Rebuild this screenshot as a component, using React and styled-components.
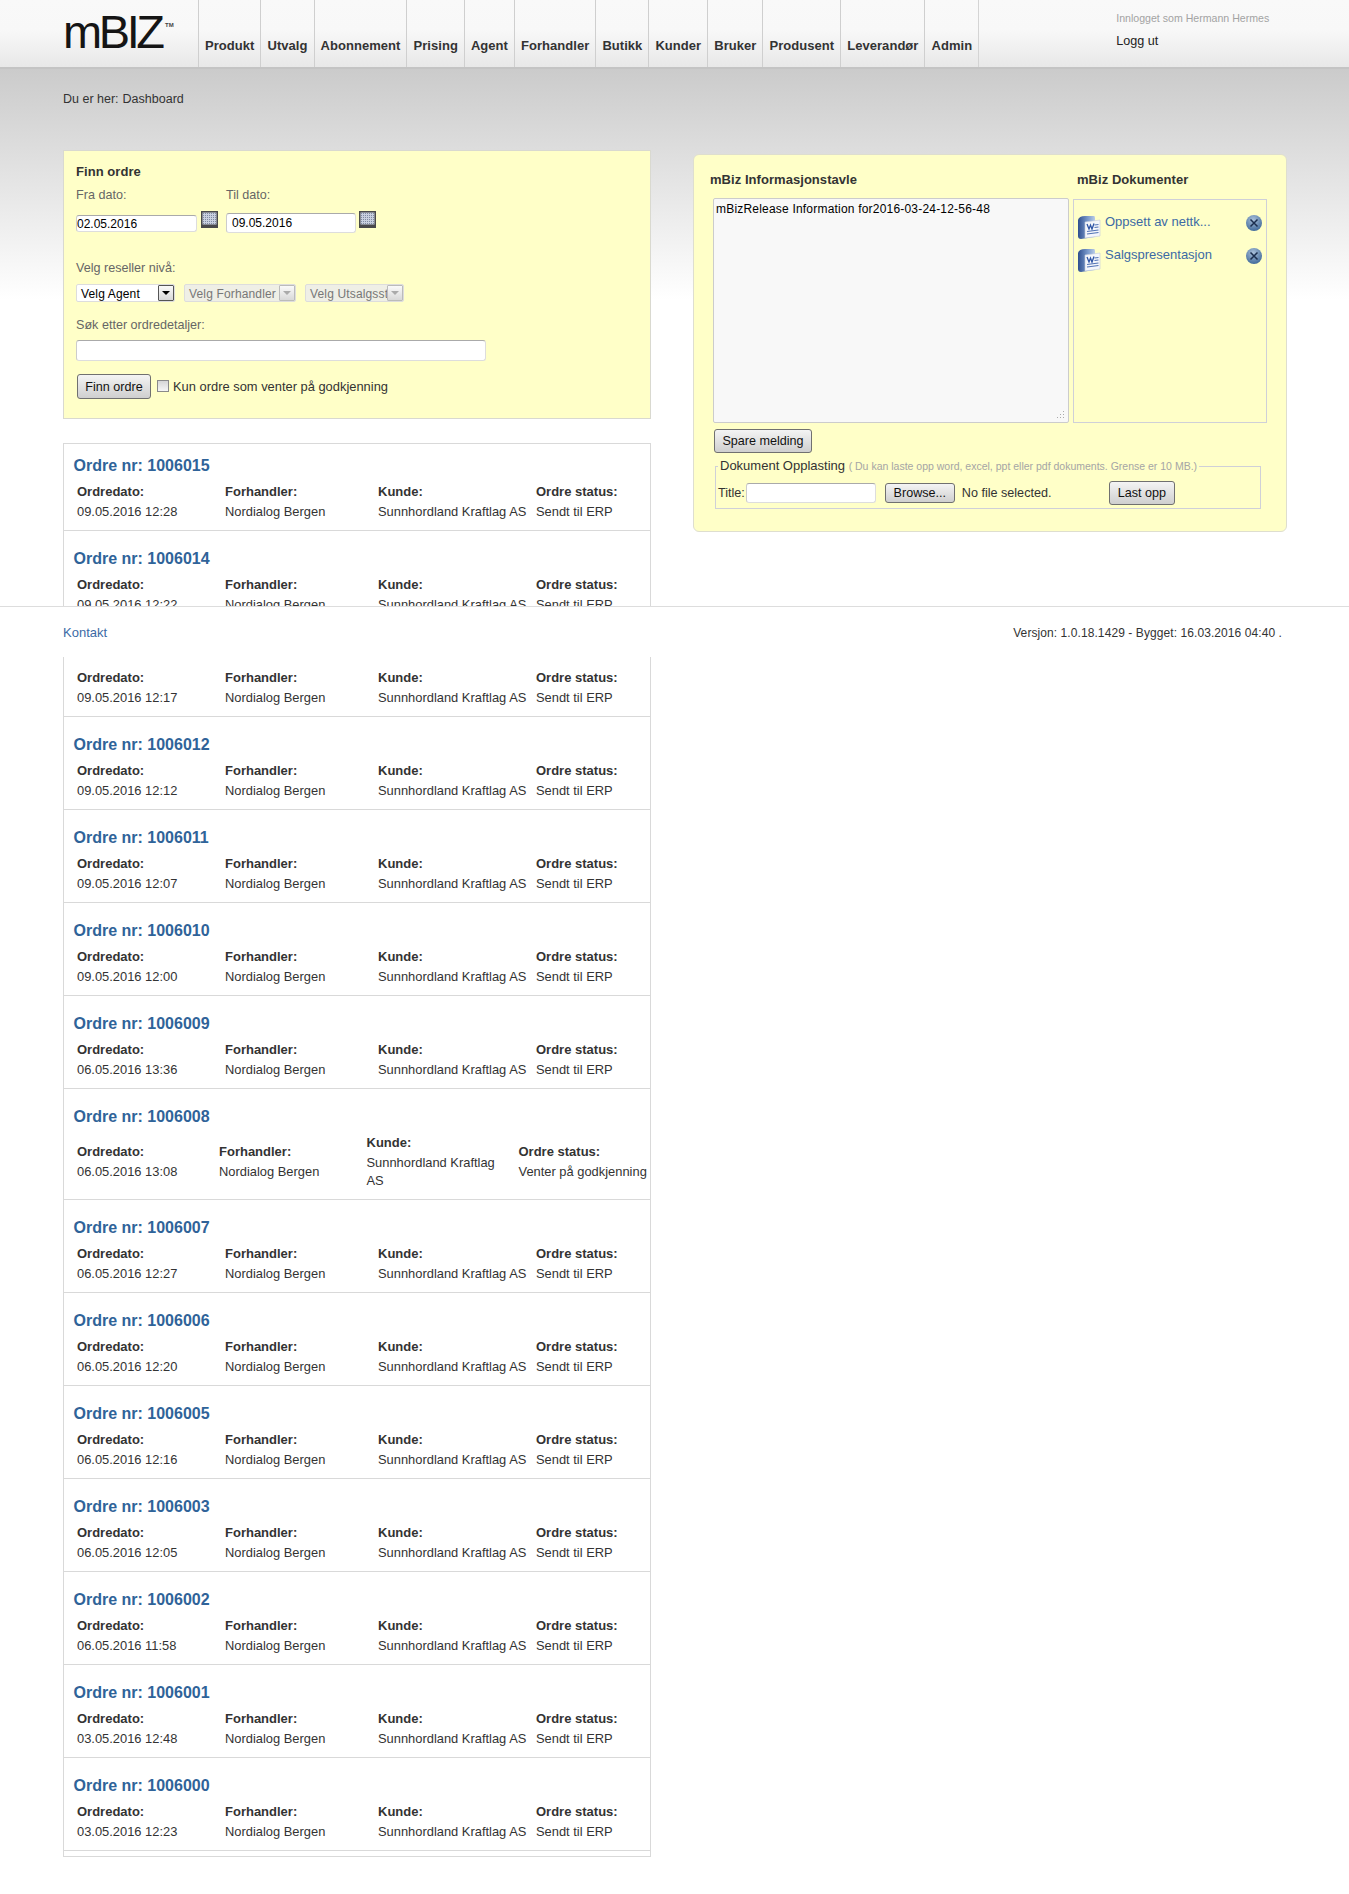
import React from "react";
import styled, { createGlobalStyle } from "styled-components";

const Global = createGlobalStyle`
  html, body { margin: 0; padding: 0; background: #fff; }
  body { font-family: "Liberation Sans", Arial, sans-serif; font-size: 12px; color: #333; }
  * { box-sizing: border-box; }
`;

const Page = styled.div`
  position: relative;
  width: 1349px;
  height: 1894px;
  overflow: hidden;
  background: linear-gradient(#cbcbcb 69px, #ffffff 300px);
`;
const Header = styled.header`
  display: flex;
  height: 69px;
  padding-left: 63px;
  background: linear-gradient(#f9f9f9 0, #f8f8f8 30px, #e8e8e8 67px);
  border-bottom: 2px solid #c4c4c4;
`;
const Logo = styled.a`
  display: block;
  position: relative;
  width: 135px;
  height: 67px;
  padding-top: 5px;
  font-size: 47px;
  line-height: 54px;
  letter-spacing: -3.4px;
  color: #151515;
  white-space: nowrap;
`;
const Trademark = styled.sup`
  position: absolute;
  left: 102px;
  top: 21px;
  font-size: 6px;
  line-height: 8px;
  letter-spacing: 0;
  font-weight: bold;
  color: #444;
`;
const Nav = styled.nav`
  display: flex;
  height: 67px;
  border-right: 1px solid #d4d4d4;
`;
const NavItem = styled.a`
  display: block;
  padding: 38px 6px 0;
  border-left: 1px solid #cfcfcf;
  font-size: 13px;
  line-height: 16px;
  letter-spacing: 0.05px;
  font-weight: bold;
  color: #333;
  white-space: nowrap;
`;
const UserBox = styled.div`
  margin-left: 137px;
  padding-top: 12px;
`;
const UserName = styled.div`
  font-size: 10.6px;
  line-height: 13px;
  color: #a3a3a3;
`;
const Logout = styled.a`
  display: block;
  margin-top: 9px;
  font-size: 12.6px;
  line-height: 14px;
  color: #222;
`;
const Crumb = styled.div`
  display: flex;
  gap: 4px;
  padding: 22px 0 0 63px;
  height: 81px;
  font-size: 12.5px;
  line-height: 16px;
  color: #333;
`;
const Columns = styled.main`
  display: grid;
  grid-template-columns: 588px 594px;
  column-gap: 42px;
  padding-left: 63px;
  align-items: start;
`;
const LeftColumn = styled.div`
  display: flex;
  flex-direction: column;
  gap: 24px;
`;
const FilterPanel = styled.section`
  height: 269px;
  padding: 13px 12px 0;
  background: #ffffc8;
  border: 1px solid #d9d9d0;
`;
const PanelHeading = styled.h3`
  margin: 0;
  font-size: 13px;
  line-height: 16px;
  letter-spacing: 0.05px;
  font-weight: bold;
  color: #333;
`;
const DocHeading = styled(PanelHeading)`
  padding-left: 4px;
`;
const DateGrid = styled.div`
  display: grid;
  grid-template-columns: 150px 1fr;
  margin-top: 7px;
`;
const FieldLabel = styled.label`
  display: block;
  font-size: 12.6px;
  line-height: 16px;
  color: #666;
  margin-top: ${(p) => p.$top || 0}px;
`;
const DateField = styled.div`
  display: flex;
  align-items: flex-start;
  margin-top: 8px;
  height: 22px;
`;
const TextInput = styled.input`
  display: block;
  border: 1px solid #ddd;
  border-top-color: #aaa;
  border-left-color: #ccc;
  border-radius: 3px;
  background: #fff;
  font: 12px "Liberation Sans", Arial, sans-serif;
  color: #000;
  outline: none;
`;
const DateInput = styled(TextInput)`
  width: ${(p) => (p.$compact ? 121 : 130)}px;
  height: ${(p) => (p.$compact ? 17 : 20)}px;
  margin-top: ${(p) => (p.$compact ? 4 : 2)}px;
  padding: 0 0 0 ${(p) => (p.$compact ? 0 : 5)}px;
`;
const CalendarSvg = styled.svg`
  display: block;
  margin-left: ${(p) => (p.$compact ? 4 : 3)}px;
`;
const SelectRow = styled.div`
  display: flex;
  gap: 9px;
  margin-top: 8px;
`;
const SelectBox = styled.div`
  display: flex;
  justify-content: space-between;
  align-items: stretch;
  width: ${(p) => p.$w}px;
  height: 18px;
  border: 1px solid #ddd;
  border-radius: 2px;
  background: ${(p) => (p.$disabled ? "#efefe6" : "#fff")};
  color: ${(p) => (p.$disabled ? "#777" : "#000")};
  overflow: hidden;
`;
const SelectText = styled.span`
  flex: 1;
  min-width: 0;
  padding-left: 4px;
  line-height: 18px;
  letter-spacing: 0.15px;
  white-space: nowrap;
  overflow: hidden;
`;
const SelectArrow = styled.span`
  display: flex;
  align-items: center;
  justify-content: center;
  flex: none;
  width: 16px;
  background: linear-gradient(#fafafa, #d8d8d8);
  border: 1px solid ${(p) => (p.$disabled ? "#bbb" : "#555")};
  border-radius: 1px;
  &::after {
    content: "";
    border: 4px solid transparent;
    border-bottom-width: 0;
    border-top: 4px solid ${(p) => (p.$disabled ? "#aaa" : "#000")};
  }
`;
const SearchInput = styled(TextInput)`
  width: 410px;
  height: 21px;
  margin-top: 7px;
`;
const ActionRow = styled.div`
  display: flex;
  align-items: center;
  margin-top: 13px;
  padding-left: 1px;
`;
const Btn = styled.button`
  display: block;
  flex: none;
  padding: 0;
  width: ${(p) => p.$w}px;
  height: ${(p) => p.$h || 25}px;
  border: 1px solid #707070;
  border-radius: 3px;
  background: linear-gradient(#f4f4f4, #cfcfcf);
  font: 12.6px "Liberation Sans", Arial, sans-serif;
  color: #111;
`;
const Check = styled.span`
  display: block;
  flex: none;
  width: 12px;
  height: 12px;
  margin: -1px 4px 0 6px;
  border: 1px solid #8a8a8a;
  background: linear-gradient(#d6d6d6, #f6f6f6);
`;
const CheckLabel = styled.span`
  font-size: 12.9px;
  color: #333;
`;
const OrderList = styled.section`
  border: 1px solid #d9d9d9;
  background: #fff;
  padding-bottom: 5px;
`;
const OrderRow = styled.article`
  padding: ${(p) => (p.$first ? 12 : 18)}px 0 8px 9.5px;
  border-bottom: 1px solid #d9d9d9;
`;
const OrderTitle = styled.h2`
  margin: 0;
  padding-top: 1px;
  font-size: 16px;
  line-height: 17px;
  font-weight: bold;
  color: #2f6399;
`;
const Cols = styled.div`
  display: grid;
  grid-template-columns: ${(p) => (p.$wide ? "142px 147.5px 152px auto" : "148px 153px 158px auto")};
  align-items: center;
  margin-top: 8px;
  padding-left: 3.5px;
  font-size: 13px;
`;
const Cell = styled.div`
  padding-right: 8px;
`;
const StatusCell = styled.div`
  white-space: nowrap;
`;
const CellLabel = styled.div`
  font-weight: bold;
  line-height: 20px;
  color: #333;
`;
const CellValue = styled.div`
  padding: 1px 0;
  font-size: 12.9px;
  line-height: 18px;
  color: #333;
`;
const InfoPanel = styled.section`
  margin-top: 4px;
  height: 378px;
  padding: 17px 0 0 16px;
  background: #ffffc8;
  border: 1px solid #dedecf;
  border-radius: 6px;
`;
const InfoGrid = styled.div`
  display: grid;
  grid-template-columns: 363px 194px;
`;
const BoardArea = styled.div`
  height: 225px;
  width: 356px;
  margin: 10px 0 0 3px;
  position: relative;
  padding: 3px 2px;
  border: 1px solid #ccc;
  border-radius: 2px;
  background: #f8f8f8;
  color: #000;
  letter-spacing: 0.2px;
  line-height: 15px;
`;
const Grip = styled.svg`
  position: absolute;
  right: 3px;
  bottom: 3px;
`;
const DocBox = styled.div`
  height: 224px;
  margin-top: 11px;
  padding: 15px 4px 0 3px;
  border: 1px solid #cfd0d8;
  display: flex;
  flex-direction: column;
  gap: 9px;
`;
const DocRow = styled.div`
  display: flex;
  align-items: flex-start;
  height: 24px;
`;
const DocName = styled.a`
  flex: 1;
  margin-left: 4px;
  font-size: 13px;
  line-height: 14px;
  color: #3c6aa5;
`;
const SaveBtn = styled(Btn)`
  margin: 6px 0 0 4px;
`;
const UploadSet = styled.fieldset`
  width: 546px;
  margin: 5px 0 0 5px;
  padding: 0 2px 3px 1px;
  border: 1px solid #cfd0d8;
`;
const UploadLegend = styled.legend`
  margin-left: 1px;
  padding: 0 2px;
  font-size: 13px;
  line-height: 16px;
  color: #333;
`;
const UploadHint = styled.span`
  font-size: 10.5px;
  color: #a5a5a5;
`;
const UploadRow = styled.div`
  display: flex;
  align-items: center;
  margin-top: 7px;
  padding-left: 1px;
  font-size: 12.6px;
`;
const TitleInput = styled(TextInput)`
  width: 130px;
  height: 20px;
  margin: 0 9px 0 1px;
`;
const FileName = styled.span`
  width: 154px;
  padding-left: 7px;
  color: #333;
`;
const Footer = styled.footer`
  position: absolute;
  left: 0;
  right: 0;
  top: 606px;
  height: 51px;
  display: flex;
  justify-content: space-between;
  padding: 17px 67px 0 63px;
  line-height: 18px;
  background: #fff;
  border-top: 1px solid #ddd;
`;
const FooterLink = styled.a`
  font-size: 13px;
  color: #3c6aa5;
`;
const Version = styled.span`
  letter-spacing: 0.08px;
  color: #333;
`;

const Calendar = ({ compact }) => {
  const cells = [];
  for (let y = 2; y < 13; y += 2)
    for (let x = 2; x < 15; x += 2)
      cells.push(<rect key={x + "-" + y} x={x} y={y} width="1" height="1" fill="#7f8aa3" />);
  return (
    <CalendarSvg $compact={compact} width="17" height="17" viewBox="0 0 17 17">
      <rect width="17" height="17" fill="#49494b" />
      <rect x="1.5" y="1.5" width="14" height="12" fill="#c9d0df" />
      {cells}
    </CalendarSvg>
  );
};

const WordIcon = () => (
  <svg width="24" height="24" viewBox="0 0 24 24" style={{ flex: "none" }}>
    <defs>
      <linearGradient id="wb" x1="0" y1="0" x2="1" y2="0">
        <stop offset="0" stopColor="#2f4f8f" />
        <stop offset="0.6" stopColor="#7d9ccd" />
        <stop offset="1" stopColor="#b9cbe6" />
      </linearGradient>
    </defs>
    <path d="M1 5 Q2 1 8 1 L17 1 Q18 1 18 3 L18 22 L4 24 Q1 24 1 21 Z" fill="url(#wb)" />
    <path d="M8 7 L23 5 L23 21 L8 23 Z" fill="#f4f6fb" stroke="#c2cbdc" strokeWidth="0.6" />
    <path d="M10 9 L12 14 L13.5 10 L15 14 L17 8.5" fill="none" stroke="#2f55a5" strokeWidth="1.3" />
    <path d="M17.5 10 L21.5 9.5 M17.5 12.5 L21.5 12 M10 16.5 L21.5 15 M10 19 L21.5 17.5" stroke="#5273b5" strokeWidth="1.1" />
  </svg>
);

const RemoveIcon = () => (
  <svg width="16" height="16" viewBox="0 0 16 16" style={{ flex: "none" }}>
    <defs>
      <radialGradient id="rb" cx="0.45" cy="0.3" r="0.8">
        <stop offset="0" stopColor="#a9c0da" />
        <stop offset="1" stopColor="#335f92" />
      </radialGradient>
    </defs>
    <circle cx="8" cy="8" r="8" fill="url(#rb)" />
    <path d="M4.5 4.5 L11.5 11.5 M11.5 4.5 L4.5 11.5" stroke="#1c2f4f" strokeWidth="1.5" />
  </svg>
);

const navItems = ["Produkt", "Utvalg", "Abonnement", "Prising", "Agent", "Forhandler", "Butikk", "Kunder", "Bruker", "Produsent", "Leverandør", "Admin"];

const orders = [
  ["1006015", "09.05.2016 12:28"],
  ["1006014", "09.05.2016 12:22"],
  ["1006013", "09.05.2016 12:17"],
  ["1006012", "09.05.2016 12:12"],
  ["1006011", "09.05.2016 12:07"],
  ["1006010", "09.05.2016 12:00"],
  ["1006009", "06.05.2016 13:36"],
  ["1006008", "06.05.2016 13:08", "Venter på godkjenning"],
  ["1006007", "06.05.2016 12:27"],
  ["1006006", "06.05.2016 12:20"],
  ["1006005", "06.05.2016 12:16"],
  ["1006003", "06.05.2016 12:05"],
  ["1006002", "06.05.2016 11:58"],
  ["1006001", "03.05.2016 12:48"],
  ["1006000", "03.05.2016 12:23"],
];

const Order = ({ id, date, status, first }) => (
  <OrderRow $first={first}>
    <OrderTitle>Ordre nr: {id}</OrderTitle>
    <Cols $wide={!!status}>
      <Cell><CellLabel>Ordredato:</CellLabel><CellValue>{date}</CellValue></Cell>
      <Cell><CellLabel>Forhandler:</CellLabel><CellValue>Nordialog Bergen</CellValue></Cell>
      <Cell><CellLabel>Kunde:</CellLabel><CellValue>Sunnhordland Kraftlag AS</CellValue></Cell>
      <StatusCell><CellLabel>Ordre status:</CellLabel><CellValue>{status || "Sendt til ERP"}</CellValue></StatusCell>
    </Cols>
  </OrderRow>
);

export default function App() {
  return (
    <Page>
      <Global />
      <Header>
        <Logo>mBIZ<Trademark>TM</Trademark></Logo>
        <Nav>
          {navItems.map((n) => <NavItem key={n}>{n}</NavItem>)}
        </Nav>
        <UserBox>
          <UserName>Innlogget som Hermann Hermes</UserName>
          <Logout>Logg ut</Logout>
        </UserBox>
      </Header>
      <Crumb><span>Du er her:</span><span>Dashboard</span></Crumb>
      <Columns>
        <LeftColumn>
          <FilterPanel>
            <PanelHeading>Finn ordre</PanelHeading>
            <DateGrid>
              <FieldLabel>Fra dato:</FieldLabel>
              <FieldLabel>Til dato:</FieldLabel>
              <DateField>
                <DateInput $compact defaultValue="02.05.2016" />
                <Calendar compact />
              </DateField>
              <DateField>
                <DateInput defaultValue="09.05.2016" />
                <Calendar />
              </DateField>
            </DateGrid>
            <FieldLabel $top={27}>Velg reseller nivå:</FieldLabel>
            <SelectRow>
              <SelectBox $w={99}><SelectText>Velg Agent</SelectText><SelectArrow /></SelectBox>
              <SelectBox $w={112} $disabled><SelectText>Velg Forhandler</SelectText><SelectArrow $disabled /></SelectBox>
              <SelectBox $w={99} $disabled><SelectText>Velg Utsalgssted</SelectText><SelectArrow $disabled /></SelectBox>
            </SelectRow>
            <FieldLabel $top={15}>Søk etter ordredetaljer:</FieldLabel>
            <SearchInput />
            <ActionRow>
              <Btn $w={74}>Finn ordre</Btn>
              <Check />
              <CheckLabel>Kun ordre som venter på godkjenning</CheckLabel>
            </ActionRow>
          </FilterPanel>
          <OrderList>
            {orders.map(([id, date, status], i) => (
              <Order key={id} id={id} date={date} status={status} first={i === 0} />
            ))}
          </OrderList>
        </LeftColumn>
        <InfoPanel>
          <InfoGrid>
            <PanelHeading>mBiz Informasjonstavle</PanelHeading>
            <DocHeading>mBiz Dokumenter</DocHeading>
            <BoardArea>
              mBizRelease Information for2016-03-24-12-56-48
              <Grip width="9" height="9" viewBox="0 0 9 9">
                <path d="M7 1h1v1H7zM4 4h1v1H4zM7 4h1v1H7zM1 7h1v1H1zM4 7h1v1H4zM7 7h1v1H7z" fill="#aaa" />
              </Grip>
            </BoardArea>
            <DocBox>
              <DocRow><WordIcon /><DocName>Oppsett av nettk...</DocName><RemoveIcon /></DocRow>
              <DocRow><WordIcon /><DocName>Salgspresentasjon</DocName><RemoveIcon /></DocRow>
            </DocBox>
          </InfoGrid>
          <SaveBtn $w={98} $h={24}>Spare melding</SaveBtn>
          <UploadSet>
            <UploadLegend>
              Dokument Opplasting <UploadHint>( Du kan laste opp word, excel, ppt eller pdf dokuments. Grense er 10 MB.)</UploadHint>
            </UploadLegend>
            <UploadRow>
              <span>Title:</span>
              <TitleInput />
              <Btn $w={70} $h={20}>Browse...</Btn>
              <FileName>No file selected.</FileName>
              <Btn $w={66} $h={24}>Last opp</Btn>
            </UploadRow>
          </UploadSet>
        </InfoPanel>
      </Columns>
      <Footer>
        <FooterLink>Kontakt</FooterLink>
        <Version>Versjon: 1.0.18.1429 - Bygget: 16.03.2016 04:40 .</Version>
      </Footer>
    </Page>
  );
}
